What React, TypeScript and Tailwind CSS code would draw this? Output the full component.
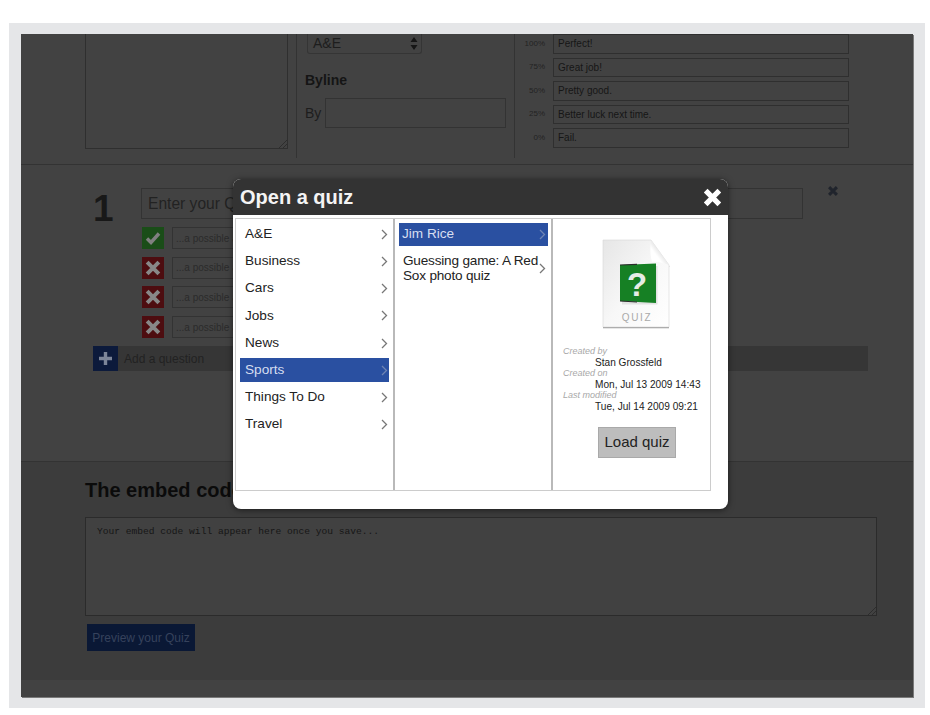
import { ReactNode } from "react";

const categories = ["A&E", "Business", "Cars", "Jobs", "News", "Sports", "Things To Do", "Travel"];
const grades = [
  { pct: "100%", text: "Perfect!" },
  { pct: "75%", text: "Great job!" },
  { pct: "50%", text: "Pretty good." },
  { pct: "25%", text: "Better luck next time." },
  { pct: "0%", text: "Fail." },
];
const answers = [true, false, false, false];

function Chevron({ color = "#777" }: { color?: string }) {
  return (
    <svg width="7" height="11" viewBox="0 0 7 11" className="shrink-0">
      <path d="M1 1l4.5 4.5L1 10" fill="none" stroke={color} strokeWidth="1.3" />
    </svg>
  );
}

function Cross({ size, color, width }: { size: number; color: string; width: number }) {
  return (
    <svg width={size} height={size} viewBox="0 0 20 20">
      <path d="M3.5 3.5l13 13M16.5 3.5l-13 13" fill="none" stroke={color} strokeWidth={width} />
    </svg>
  );
}

function Resizer() {
  return (
    <svg width="9" height="9" viewBox="0 0 9 9" className="absolute right-0 bottom-0">
      <path d="M1 9l8-8M5 9l4-4" stroke="#2d2d2d" strokeWidth="1" />
    </svg>
  );
}

function AnswerRow({ correct }: { correct: boolean }) {
  return (
    <div className="flex h-[22px] items-center gap-2">
      <div
        className={
          correct
            ? "flex h-[22px] w-[22px] items-center justify-center bg-[#1a4d18]"
            : "flex h-[22px] w-[22px] items-center justify-center bg-[#4d0d10]"
        }
      >
        {correct ? (
          <svg width="16" height="14" viewBox="0 0 16 14">
            <path d="M2 7.5l4 4 8-9" fill="none" stroke="#808080" strokeWidth="3.4" />
          </svg>
        ) : (
          <Cross size={18} color="#888888" width={4.4} />
        )}
      </div>
      <div className="flex h-[22px] w-[200px] items-center border border-[#333] pl-[3px] text-[10px] text-[#2b2b2b]">
        ...a possible answer
      </div>
    </div>
  );
}

function QuizFile() {
  return (
    <svg width="70" height="92" viewBox="0 0 70 92">
      <defs>
        <linearGradient id="paper" x1="0" y1="0" x2="1" y2="1">
          <stop offset="0" stopColor="#e6e6e6" />
          <stop offset="0.5" stopColor="#f7f7f7" />
          <stop offset="1" stopColor="#ffffff" />
        </linearGradient>
        <linearGradient id="fold" x1="0" y1="1" x2="1" y2="0">
          <stop offset="0.35" stopColor="#ffffff" />
          <stop offset="1" stopColor="#a9a9a9" />
        </linearGradient>
      </defs>
      <path d="M2 1h48l18 25v62H2z" fill="#9c9c9c" transform="translate(0 1.2)" />
      <path d="M2 1h48l18 25v62H2z" fill="url(#paper)" stroke="#d6d6d6" strokeWidth="0.6" />
      <path d="M50 1c-1 8-1 15 1 22 5-1 11 1 17 3z" fill="url(#fold)" />
      <path d="M21 27h35.5v38.5H21z" fill="#e2e2e2" />
      <path d="M19 26l36-1.5v39.5l-36-2z" fill="#168024" />
      <path d="M19 25.5l17-.8v1.2l-17 .6zM19 61.5l17 1v1l-17-1z" fill="#2c2c2c" />
      <text x="36" y="57" textAnchor="middle" fontSize="33" fontWeight="700" fill="#e6ece6" fontFamily="Liberation Sans">
        ?
      </text>
      <text x="36" y="82" textAnchor="middle" fontSize="10" letterSpacing="1.6" fill="#a9a9a9" fontFamily="Liberation Sans">
        QUIZ
      </text>
    </svg>
  );
}

function Meta({ label, children }: { label: string; children: ReactNode }) {
  return (
    <div>
      <div className="h-[11px] text-[9px] leading-[11px] text-[#a8a8a8] italic">{label}</div>
      <div className="h-[11px] pl-[32px] text-[10.1px] leading-[11px] whitespace-nowrap text-[#222]">{children}</div>
    </div>
  );
}

function QuizModal() {
  return (
    <div className="absolute top-[145px] left-[212px] flex h-[330px] w-[495px] flex-col overflow-hidden rounded-lg bg-white shadow-[0_1px_6px_rgba(0,0,0,0.55)]">
      <div className="flex h-[36px] shrink-0 items-center justify-between bg-[#333333] pr-[5px] pl-[7px]">
        <span className="text-[20px] font-bold text-[#f4f4f4]">Open a quiz</span>
        <Cross size={21} color="#ffffff" width={5} />
      </div>
      <div className="mt-[3px] ml-[2px] flex h-[273px] w-[476px] border border-[#cccccc] text-[13.6px] text-[#222]">
        <div className="flex w-[159px] flex-col gap-[3.7px] border-r-2 border-[#b9b9b9] px-[4px] pt-[3.5px]">
          {categories.map((name) => (
            <div
              key={name}
              className={
                name === "Sports"
                  ? "flex h-[23.5px] items-center justify-between bg-[#2a50a1] pr-[1px] pl-[5px] text-[#d6def0]"
                  : "flex h-[23.5px] items-center justify-between pr-[1px] pl-[5px]"
              }
            >
              {name}
              <Chevron color={name === "Sports" ? "#6f84b4" : "#777"} />
            </div>
          ))}
        </div>
        <div className="flex w-[158px] flex-col gap-[7px] border-r-2 border-[#b9b9b9] pt-[4px] pr-[3px] pl-[4px]">
          <div className="flex h-[23px] items-center justify-between bg-[#2a50a1] pr-[2px] pl-[3px] text-[#d6def0]">
            Jim Rice
            <Chevron color="#6f84b4" />
          </div>
          <div className="flex items-center justify-between pr-[2px] pl-[4px] leading-[15px]">
            <span className="mr-[-3px] w-[139px] shrink-0 tracking-[-0.2px]">Guessing game: A Red Sox photo quiz</span>
            <Chevron />
          </div>
        </div>
        <div className="flex flex-1 flex-col pt-[20px] pr-[9px] pl-[10px]">
          <div className="flex justify-center pl-[7px]">
            <QuizFile />
          </div>
          <div className="mt-[15px]">
            <Meta label="Created by">Stan Grossfeld</Meta>
            <Meta label="Created on">Mon, Jul 13 2009 14:43</Meta>
            <Meta label="Last modified">Tue, Jul 14 2009 09:21</Meta>
          </div>
          <div className="mt-[15px] ml-[35px] flex h-[31px] w-[78px] items-center justify-center border border-[#a9a9a9] bg-[#bdbdbd] text-[15px] text-[#222]">
            Load quiz
          </div>
        </div>
      </div>
    </div>
  );
}

export default function App() {
  return (
    <div className="h-[715px] w-[930px] bg-white pt-[23px] pl-[9px] [font-family:'Liberation_Sans',Arial,sans-serif]">
      <div className="h-[685px] w-[916px] bg-[#e5e6e8] pt-[11px] pl-[12px]">
        <div className="relative flex h-[663px] w-[892px] flex-col overflow-hidden bg-[#424242] shadow-[1px_1px_0_#7a7a7a]">
          {/* top form */}
          <section className="flex h-[131px] shrink-0 border-b border-[#333] pl-[64px]">
            <div className="relative h-[115px] w-[203px] border-x border-b border-[#2f2f2f]">
              <Resizer />
            </div>
            <div className="ml-[8px] flex h-[124px] w-[219px] flex-col border-x border-[#333] pl-[8px]">
              <div className="ml-[2px] flex h-[20px] w-[115px] items-center justify-between rounded-b-[3px] border-x border-b border-[#353535] pr-[3px] pl-[5px] text-[14px] text-[#1d1d1d]">
                A&E
                <svg width="8" height="13" viewBox="0 0 8 13">
                  <path d="M4 0l3.5 5h-7zM4 13L.5 8h7z" fill="#151515" />
                </svg>
              </div>
              <div className="mt-[16px] text-[14px] font-bold text-[#151515]">Byline</div>
              <div className="mt-[7px] flex items-center gap-[4px] text-[14px] text-[#1d1d1d]">
                By
                <div className="h-[30px] w-[181px] border border-[#333]" />
              </div>
            </div>
            <div className="flex flex-col gap-[4px] pl-[1px]">
              {grades.map((g) => (
                <div key={g.pct} className="flex h-[19.5px] items-center">
                  <span className="w-[29px] text-right text-[8px] text-[#222]">{g.pct}</span>
                  <div className="ml-[8px] flex h-[19.5px] w-[296px] items-center border border-[#2f2f2f] pl-[4px] text-[10px] text-[#161616]">
                    {g.text}
                  </div>
                </div>
              ))}
            </div>
          </section>

          {/* question */}
          <section className="h-[297px] shrink-0 border-b border-[#333] pt-[23px]">
            <div className="flex pl-[72px]">
              <span className="w-[48px] text-[37px] leading-[42px] font-bold text-[#181818]">1</span>
              <div className="flex flex-col">
                <div className="flex items-start">
                  <div className="flex h-[31px] w-[662px] items-center border border-[#333] pl-[6px] text-[15.6px] text-[#222]">
                    Enter your Question
                  </div>
                  <div className="mt-[-3px] ml-[24px]">
                    <Cross size={12} color="#20242c" width={5} />
                  </div>
                </div>
                <div className="mt-[8px] ml-[1px] flex flex-col gap-[7.7px]">
                  {answers.map((correct, i) => (
                    <AnswerRow key={i} correct={correct} />
                  ))}
                </div>
              </div>
            </div>
            <div className="mt-[7.5px] ml-[72px] flex h-[25px] w-[775px] items-center bg-[#363636] text-[12px] text-[#222]">
              <div className="flex h-[25px] w-[25px] items-center justify-center bg-[#0c1a3b]">
                <svg width="15" height="15" viewBox="0 0 15 15">
                  <path d="M7.5 1v13M1 7.5h13" stroke="#7c8598" strokeWidth="3.4" />
                </svg>
              </div>
              <span className="pt-[1px] pl-[6px]">Add a question</span>
            </div>
          </section>

          {/* embed code */}
          <section className="flex h-[218px] shrink-0 flex-col bg-[#3c3c3c] pl-[64px]">
            <h2 className="mt-[17px] h-[23px] text-[20px] leading-[23px] font-bold text-[#0b0b0b]">
              The embed code
            </h2>
            <div className="relative mt-[15px] h-[99px] w-[792px] border border-[#2b2b2b] bg-[#414141] pt-[7px] pl-[11px] [font-family:'Liberation_Mono',monospace] text-[9.6px] text-[#161616]">
              Your embed code will appear here once you save...
              <Resizer />
            </div>
            <div className="mt-[8px] ml-[2px] flex h-[27px] w-[108px] items-center justify-center bg-[#0a1835] text-[12px] text-[#36425c]">
              Preview your Quiz
            </div>
          </section>

          <div className="flex-1 bg-[#424242]" />
          <QuizModal />
        </div>
      </div>
    </div>
  );
}
